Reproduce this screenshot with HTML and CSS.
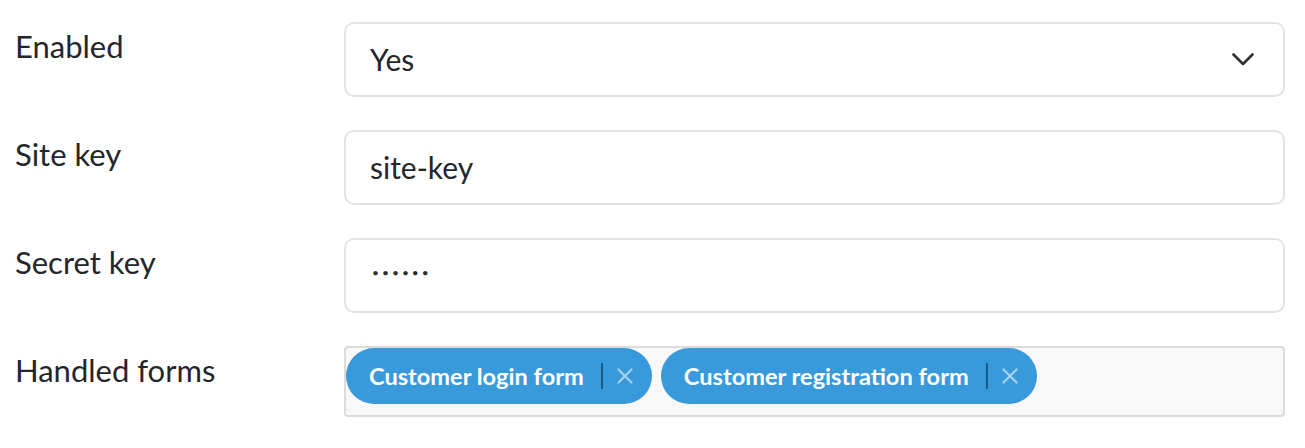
FILE: index.html
```html
<!DOCTYPE html>
<html lang="en">
<head>
<meta charset="utf-8">
<title>Captcha settings</title>
<link rel="stylesheet" href="styles.css">
</head>
<body>
<form class="settings">
  <div class="row">
    <label class="label">Enabled</label>
    <div class="control select">
      <span class="value">Yes</span>
      <svg class="chevron" width="22" height="13" viewBox="0 0 22 13"><polyline points="1.5,1.5 11,11 20.5,1.5" fill="none" stroke="#2b3035" stroke-width="2.6" stroke-linecap="round" stroke-linejoin="round"/></svg>
    </div>
  </div>
  <div class="row">
    <label class="label">Site key</label>
    <div class="control"><span class="value">site-key</span></div>
  </div>
  <div class="row">
    <label class="label">Secret key</label>
    <div class="control"><span class="dots">••••••</span></div>
  </div>
  <div class="row">
    <label class="label">Handled forms</label>
    <div class="tags">
      <span class="tag"><span class="tag-text">Customer login form</span><span class="sep"></span><svg class="x" width="16" height="16" viewBox="0 0 16 16"><path d="M1.5 1.5L14.5 14.5M14.5 1.5L1.5 14.5" stroke="#a7d1ee" stroke-width="2.2" stroke-linecap="round"/></svg></span>
      <span class="tag"><span class="tag-text">Customer registration form</span><span class="sep"></span><svg class="x" width="16" height="16" viewBox="0 0 16 16"><path d="M1.5 1.5L14.5 14.5M14.5 1.5L1.5 14.5" stroke="#a7d1ee" stroke-width="2.2" stroke-linecap="round"/></svg></span>
    </div>
  </div>
</form>
</body>
</html>
```
FILE: styles.css
```css
html, body {
  margin: 0;
  padding: 0;
  background: #ffffff;
}
body {
  font-family: "Lato", "Noto Sans", sans-serif;
  color: #23272b;
}
.settings {
  display: flex;
  flex-direction: column;
  gap: 33px;
  padding: 22px 0 0 15px;
}
.row {
  display: grid;
  grid-template-columns: 329px 941px;
  align-items: start;
}
.label {
  font-size: 31px;
  line-height: 36px;
  padding-top: 6px;
}
.control {
  box-sizing: border-box;
  height: 75px;
  border: 2px solid #e0e3e7;
  border-radius: 10px;
  background: #fff;
  display: flex;
  align-items: center;
  padding: 0 24px;
}
.select {
  justify-content: space-between;
  padding-right: 29px;
}
.value {
  font-size: 30px;
  line-height: 36px;
  margin-top: -2px;
}
.dots {
  font-size: 12px;
  letter-spacing: 3px;
  margin-top: -6px;
  margin-left: 2px;
  color: #2b3035;
}
.tags {
  box-sizing: border-box;
  height: 71px;
  border: 2px solid #dcdcdc;
  border-radius: 4px;
  background: #f8f8f8;
  display: flex;
  align-items: flex-start;
  gap: 9px;
  padding: 0;
}
.tag {
  display: flex;
  align-items: center;
  height: 56px;
  border-radius: 28px;
  background: #3899db;
  color: #fff;
  padding: 0 19px 0 23px;
}
.tag-text {
  font-size: 23.6px;
  font-weight: 700;
  line-height: 30px;
}
.sep {
  width: 2px;
  height: 26px;
  background: #175d8c;
  margin: 0 14px 0 17px;
}
.x {
  display: block;
}
```
